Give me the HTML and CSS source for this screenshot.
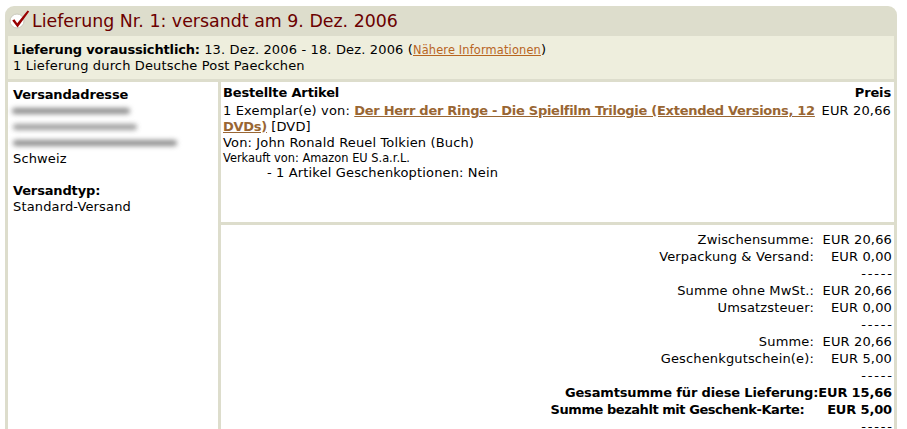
FILE: index.html
```html
<!DOCTYPE html>
<html lang="de">
<head>
<meta charset="utf-8">
<title>Lieferung Nr. 1</title>
<link rel="stylesheet" href="styles.css">
</head>
<body>
<div class="shipment">
  <div class="shipment-head">
    <svg class="check" width="22" height="22" viewBox="0 0 22 22" aria-hidden="true">
      <circle cx="8" cy="12" r="7" fill="#ffffff" stroke="#c9c9bb" stroke-width="1"/>
      <path d="M3.2 11.6 L5.4 10.2 L8.2 14.2 L18.6 1.6 L20.2 2.6 L8.6 18.6 Z" fill="#990000"/>
    </svg>
    <h1 class="shipment-title">Lieferung Nr. 1: versandt am 9. Dez. 2006</h1>
  </div>
  <div class="shipment-body">
    <div class="delivery-info">
      <div><b class="strong">Lieferung voraussichtlich:</b> 13. Dez. 2006 - 18. Dez. 2006 (<a class="more-link" href="#">Nähere Informationen</a>)</div>
      <div>1 Lieferung durch Deutsche Post Paeckchen</div>
    </div>
    <div class="detail-grid">
      <div class="address-cell">
        <div class="label strong">Versandadresse</div>
        <div class="redacted"><span class="blur w1"></span></div>
        <div class="redacted"><span class="blur w2"></span></div>
        <div class="redacted"><span class="blur w3"></span></div>
        <div>Schweiz</div>
        <div class="label strong spaced">Versandtyp:</div>
        <div>Standard-Versand</div>
      </div>
      <div class="order-col">
        <div class="items-cell">
          <div class="items-head strong"><span>Bestellte Artikel</span><span>Preis</span></div>
          <div class="item-row">
            <div class="item-desc">
              <div>1 Exemplar(e) von: <a class="product-link strong" href="#">Der Herr der Ringe - Die Spielfilm Trilogie (Extended Versions, 12 DVDs)</a> [DVD]</div>
              <div>Von: John Ronald Reuel Tolkien (Buch)</div>
              <div class="seller">Verkauft von: Amazon EU S.a.r.L.</div>
              <div class="gift">- 1 Artikel Geschenkoptionen: Nein</div>
            </div>
            <div class="item-price">EUR 20,66</div>
          </div>
        </div>
        <div class="totals-cell">
          <div class="totals">
            <span class="t-label">Zwischensumme:&nbsp;</span><span class="t-value">EUR 20,66</span>
            <span class="t-label">Verpackung &amp; Versand:&nbsp;</span><span class="t-value">EUR 0,00</span>
            <span class="t-label"></span><span class="t-value dashes">-----</span>
            <span class="t-label">Summe ohne MwSt.:&nbsp;</span><span class="t-value">EUR 20,66</span>
            <span class="t-label">Umsatzsteuer:&nbsp;</span><span class="t-value">EUR 0,00</span>
            <span class="t-label"></span><span class="t-value dashes">-----</span>
            <span class="t-label">Summe:&nbsp;</span><span class="t-value">EUR 20,66</span>
            <span class="t-label">Geschenkgutschein(e):&nbsp;</span><span class="t-value">EUR 5,00</span>
            <span class="t-label"></span><span class="t-value dashes">-----</span>
            <span class="t-label strong">Gesamtsumme für diese Lieferung:</span><span class="t-value strong">EUR 15,66</span>
            <span class="t-label strong gap">Summe bezahlt mit Geschenk-Karte:</span><span class="t-value strong">EUR 5,00</span>
            <span class="t-label"></span><span class="t-value dashes">-----</span>
          </div>
        </div>
      </div>
    </div>
  </div>
</div>
</body>
</html>
```

FILE: styles.css
```css
html {
  overflow: hidden;
}

body {
  margin: 0;
  background: #ffffff;
  color: #000000;
  font-family: "DejaVu Sans", Verdana, sans-serif;
  font-size: 13px;
  line-height: 16px;
  letter-spacing: 0.15px;
}

.strong {
  font-weight: bold;
  letter-spacing: -0.15px;
}

.shipment {
  margin: 6px 10px 0 5px;
  background: #ddddcc;
  border-radius: 9px 9px 0 0;
}

.shipment-head {
  height: 30px;
  display: flex;
  align-items: center;
  padding-left: 4px;
}

.check {
  display: block;
  flex: none;
  margin-top: -2px;
}

.shipment-title {
  margin: 0 0 0 1px;
  font-size: 17.4px;
  font-weight: normal;
  letter-spacing: 0;
  line-height: 20px;
  color: #6b0000;
}

.shipment-body {
  padding: 0 3px;
}

.delivery-info {
  background: #eeeedd;
  padding: 6px 5px 5px;
}

.more-link {
  font-size: 11.4px;
  color: #b8651f;
  text-decoration: underline;
}

.detail-grid {
  margin-top: 3px;
  display: grid;
  grid-template-columns: 210px 1fr;
  column-gap: 3px;
}

.address-cell {
  background: #ffffff;
  padding: 5px 5px 0;
}

.label.spaced {
  margin-top: 16px;
}

.redacted {
  height: 16px;
  display: flex;
  align-items: center;
}

.blur {
  display: block;
  height: 6px;
  border-radius: 3px;
  background: #8d8d8d;
  filter: blur(2.4px);
}

.blur.w1 { width: 118px; margin-left: -1px; }
.blur.w2 { width: 124px; opacity: 0.85; }
.blur.w3 { width: 164px; }

.order-col {
  display: flex;
  flex-direction: column;
  gap: 3px;
}

.items-cell {
  background: #ffffff;
  min-height: 140px;
  box-sizing: border-box;
  padding: 3px 3px 0 2px;
}

.items-head {
  display: flex;
  justify-content: space-between;
  margin-bottom: 2px;
}

.item-row {
  display: grid;
  grid-template-columns: 1fr auto;
  column-gap: 2px;
}

.product-link {
  color: #996633;
  text-decoration: underline;
  letter-spacing: -0.28px;
}

.seller {
  font-size: 11.4px;
  line-height: 14px;
  letter-spacing: 0;
}

.gift {
  padding-left: 44px;
}

.item-price {
  white-space: nowrap;
}

.totals-cell {
  background: #ffffff;
  padding: 6px 2px 4px 2px;
  flex: 1;
}

.totals {
  display: grid;
  grid-template-columns: 1fr auto;
  text-align: right;
  line-height: 17px;
}

.t-value {
  white-space: nowrap;
}

.dashes {
  letter-spacing: 1.8px;
  margin-right: -1.8px;
}

.t-label.gap {
  padding-right: 14px;
  letter-spacing: -0.45px;
}
```
